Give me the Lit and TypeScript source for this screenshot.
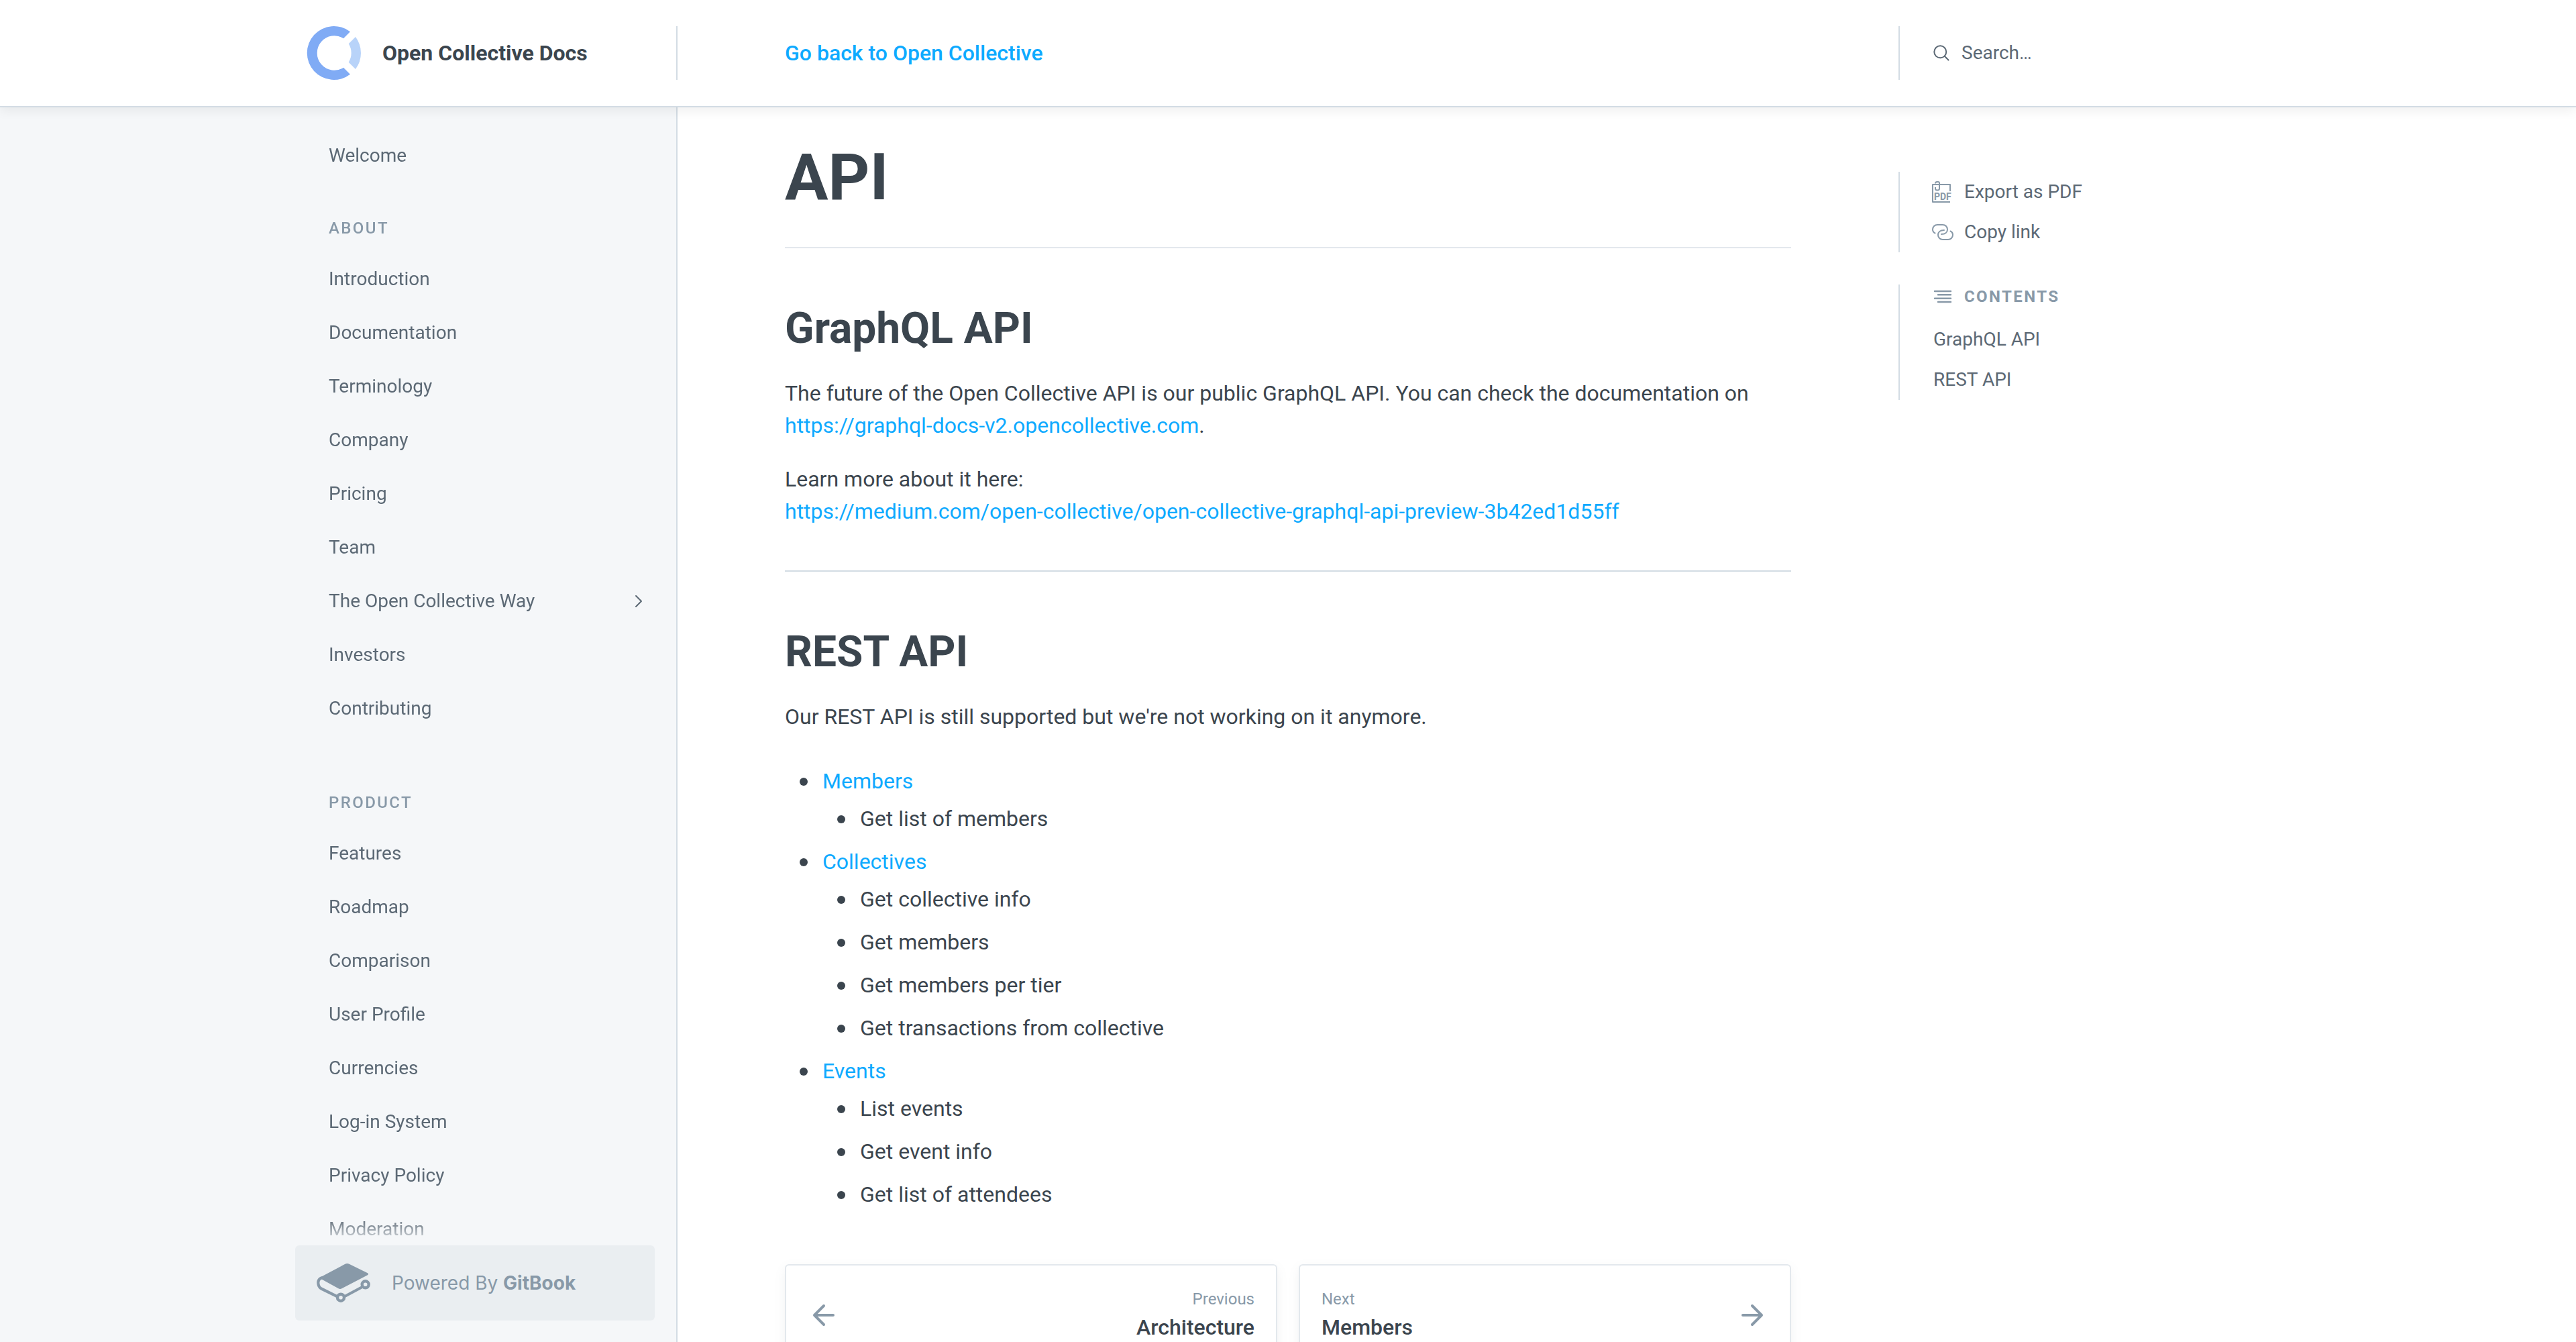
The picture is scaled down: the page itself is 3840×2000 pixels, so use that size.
import { LitElement, html, css, svg } from "lit";
import { customElement } from "lit/decorators.js";

interface Section {
  title?: string;
  pages: { label: string; nested?: boolean }[];
}

const page = (label: string, nested = false) => ({ label, nested });

const SECTIONS: Section[] = [
  { pages: [page("Welcome")] },
  {
    title: "About",
    pages: [
      page("Introduction"),
      page("Documentation"),
      page("Terminology"),
      page("Company"),
      page("Pricing"),
      page("Team"),
      page("The Open Collective Way", true),
      page("Investors"),
      page("Contributing"),
    ],
  },
  {
    title: "Product",
    pages: [
      page("Features"),
      page("Roadmap"),
      page("Comparison"),
      page("User Profile"),
      page("Currencies"),
      page("Log-in System"),
      page("Privacy Policy"),
      page("Moderation"),
    ],
  },
];

const ENDPOINTS = [
  { name: "Members", items: ["Get list of members"] },
  {
    name: "Collectives",
    items: [
      "Get collective info",
      "Get members",
      "Get members per tier",
      "Get transactions from collective",
    ],
  },
  { name: "Events", items: ["List events", "Get event info", "Get list of attendees"] },
];

const arrow = (left: boolean) => html`
  <svg class="arrow" viewBox="0 0 32 32" aria-hidden="true">
    ${left
      ? svg`<path d="M30 16H2M16 2L2 16L16 30" />`
      : svg`<path d="M2 16H30M16 2L30 16L16 30" />`}
  </svg>
`;

@customElement("app-root")
export class AppRoot extends LitElement {
  static styles = css`
    :host {
      display: flex;
      flex-direction: column;
      height: 100vh;
      overflow: hidden;
      background: #fff;
      color: #3b454e;
      font-family: Roboto, "Liberation Sans", sans-serif;
      font-size: 32px;
      line-height: 48px;
    }
    * {
      box-sizing: border-box;
    }
    a {
      color: inherit;
      text-decoration: none;
    }
    svg {
      display: block;
      flex: none;
      overflow: visible;
      fill: none;
      stroke: currentColor;
      stroke-linecap: round;
      stroke-linejoin: round;
    }
    button,
    input {
      font: inherit;
      color: inherit;
      background: none;
      border: 0;
      padding: 0;
      margin: 0;
    }
    h1,
    h2,
    h3,
    p,
    ul {
      margin: 0;
      padding: 0;
    }
    h1,
    h2 {
      font-weight: 700;
    }

    .header {
      position: relative;
      z-index: 1;
      display: flex;
      align-items: center;
      flex: none;
      height: 160px;
      border-bottom: 2px solid #d3dce4;
      box-shadow: 0 6px 16px rgba(0, 0, 0, 0.06);
      background: #fff;
    }
    .brand {
      display: flex;
      align-items: center;
      gap: 32px;
      width: calc(50% - 910px);
      min-width: 600px;
      height: 80px;
      padding-left: calc(50% - 1462px);
      border-right: 2px solid #d3dce4;
      font-weight: 700;
    }
    .logo {
      width: 80px;
      height: 80px;
    }
    .back {
      flex: 1;
      padding-left: 160px;
      color: #0eaaff;
      font-weight: 500;
    }
    .search {
      display: flex;
      align-items: center;
      gap: 16px;
      width: calc(50% - 910px);
      height: 80px;
      padding-left: 48px;
      border-left: 2px solid #d3dce4;
      color: #5c6975;
      font-size: 28px;
    }
    .search svg {
      width: 28px;
      height: 28px;
      stroke-width: 2;
    }
    .search input {
      width: 320px;
      height: 48px;
      outline: none;
    }
    .search input::placeholder {
      color: #5c6975;
      opacity: 1;
    }

    .body {
      display: flex;
      flex: 1;
      min-height: 0;
    }
    .sidebar {
      display: flex;
      flex-direction: column;
      width: calc(50% - 910px);
      min-width: 600px;
      padding-left: calc(50% - 1480px);
      padding-right: 32px;
      border-right: 2px solid #d3dce4;
      background: #f5f7f9;
      color: #5c6975;
      font-size: 28px;
    }
    .nav {
      flex: 1;
      min-height: 0;
      overflow: hidden;
      padding: 32px 14px 0 50px;
      mask-image: linear-gradient(to top, transparent, #000 40px);
    }
    .section + .section {
      padding-top: 32px;
    }
    .section + .section + .section {
      padding-top: 64px;
    }
    .caps {
      color: #8899a8;
      font-size: 24px;
      font-weight: 500;
      line-height: 32px;
      letter-spacing: 0.1em;
      text-transform: uppercase;
    }
    .section .caps {
      padding: 20px 0;
    }
    .link {
      display: flex;
      align-items: center;
      justify-content: space-between;
      height: 80px;
    }
    .link svg {
      width: 20px;
      height: 20px;
      stroke-width: 2;
    }
    .powered {
      display: flex;
      align-items: center;
      gap: 32px;
      flex: none;
      height: 112px;
      margin-bottom: 32px;
      padding-left: 32px;
      border-radius: 6px;
      background: #eaeef1;
      color: #8899a8;
      font-family: Inter, Roboto, sans-serif;
    }
    .powered svg {
      width: 80px;
      height: 60px;
    }
    .powered b {
      font-weight: 700;
    }

    .main {
      flex: 1;
      min-width: 0;
      padding: 48px 160px 0;
      overflow: hidden;
    }
    h1 {
      padding-bottom: 48px;
      border-bottom: 2px solid #e3e8ed;
      font-size: 96px;
      line-height: 112px;
    }
    h2 {
      margin: 80px 0 32px;
      font-size: 64px;
      line-height: 80px;
    }
    p + p {
      margin-top: 32px;
    }
    .text a {
      color: #0eaaff;
    }
    hr {
      height: 2px;
      margin: 64px 0 0;
      border: 0;
      background: #d3dce4;
    }
    .list {
      margin-top: 48px;
    }
    ul {
      list-style: none;
    }
    .list li {
      position: relative;
      padding-left: 56px;
    }
    .list li + li {
      margin-top: 16px;
    }
    .list li ul {
      margin-top: 8px;
    }
    .list li::before {
      content: "";
      position: absolute;
      left: 22px;
      top: 19px;
      width: 12px;
      height: 12px;
      border-radius: 50%;
      background: #3b454e;
    }
    .pager {
      display: grid;
      grid-template-columns: 1fr 1fr;
      gap: 32px;
      margin-top: 80px;
    }
    .card {
      display: flex;
      align-items: center;
      justify-content: space-between;
      height: 152px;
      padding: 0 32px 0 40px;
      border: 2px solid #e3e8ed;
      border-radius: 6px;
      box-shadow: 0 6px 16px rgba(116, 129, 141, 0.1);
      font-weight: 500;
      line-height: 44px;
    }
    .card.next {
      padding: 0 40px 0 32px;
    }
    .card span {
      padding-bottom: 4px;
    }
    .card small {
      display: block;
      color: #8899a8;
      font-size: 24px;
      font-weight: 400;
      line-height: 40px;
    }
    .prev {
      text-align: right;
    }
    .arrow {
      width: 32px;
      height: 32px;
      color: #8899a8;
      stroke-width: 4;
    }

    .aside {
      display: flex;
      flex-direction: column;
      gap: 48px;
      width: calc(50% - 910px);
      padding-top: 96px;
      color: #5c6975;
      font-size: 28px;
      line-height: 60px;
    }
    .group {
      display: flex;
      flex-direction: column;
      border-left: 2px solid #d3dce4;
      padding-left: 50px;
    }
    .tools {
      padding-left: 48px;
    }
    .tool {
      display: flex;
      align-items: center;
      gap: 16px;
      height: 60px;
      cursor: pointer;
    }
    .tool svg {
      width: 32px;
      height: 32px;
      color: #8899a8;
      stroke-width: 2;
    }
    .contents {
      display: flex;
      align-items: center;
      gap: 18px;
      padding: 2px 0 18px;
    }
    .contents svg {
      width: 28px;
      height: 20px;
      stroke-width: 2.4;
    }
    .group .caps {
      font-weight: 700;
    }
    .pdf {
      font: 700 14px Roboto, sans-serif;
      fill: currentColor;
      stroke: none;
    }
  `;

  render() {
    return html`
      <header class="header">
        <a class="brand" href="#">
          <svg class="logo" viewBox="0 0 80 80" aria-hidden="true">
            <path
              d="M64 8.200A40 40 0 1 0 64 71.800L54 61.800A25.700 25.700 0 1 1 54 18.200Z"
              fill="#80abf5" stroke="none"
            />
            <path
              d="M72 16A40 40 0 0 1 72 64L61.700 53.700A25.700 25.700 0 0 0 61.700 26.300Z"
              fill="#b8d3f9" stroke="none"
            />
          </svg>
          Open Collective Docs
        </a>
        <a class="back" href="#">Go back to Open Collective</a>
        <label class="search">
          <svg viewBox="0 0 28 28" aria-hidden="true">
            <circle cx="12.300" cy="12.300" r="9" />
            <path d="M18.800 18.800L24.500 24.500" />
          </svg>
          <input type="search" placeholder="Search…" aria-label="Search" />
        </label>
      </header>
      <div class="body">
        <aside class="sidebar">
          <nav class="nav">
            ${SECTIONS.map(
              (s) => html`<div class="section">
                ${s.title ? html`<h3 class="caps">${s.title}</h3>` : ""}
                ${s.pages.map(
                  (p) => html`<a class="link" href="#"
                    >${p.label}${p.nested
                      ? html`<svg viewBox="0 0 20 20" aria-hidden="true"><path d="M6 2L14 10L6 18" /></svg>`
                      : ""}</a
                  >`
                )}
              </div>`
            )}
          </nav>
          <a class="powered" href="#">
            <svg viewBox="0 0 80 60" aria-hidden="true">
              <path
                d="M4.500 22L42.500 1.800Q45.500 .3 48.500 1.800L76 15.300Q78.200 16.800 76 18.200L37.500 38.300Q35 39.700 32.500 38.300L7.500 24.500Q5.500 24.500 3 27Z"
                fill="currentColor" stroke="none"
              />
              <path d="M7 22.500Q2.200 24.500 2.300 30Q2.500 36 7 38.500L31 50.300M41 50.500L68 36" stroke-width="4.200" />
              <circle cx="36" cy="51.700" r="5" stroke-width="4.400" fill="#eaeef1" />
              <circle cx="72.700" cy="32.300" r="5" stroke-width="4.400" fill="#eaeef1" />
            </svg>
            <span>Powered By <b>GitBook</b></span>
          </a>
        </aside>
        <main class="main">
          <h1>API</h1>
          <section class="text">
            <h2>GraphQL API</h2>
            <p>
              The future of the Open Collective API is our public GraphQL API. You can check the documentation on
              <a href="#">https://graphql-docs-v2.opencollective.com</a>.
            </p>
            <p>
              Learn more about it here:<br />
              <a href="#">https://medium.com/open-collective/open-collective-graphql-api-preview-3b42ed1d55ff</a>
            </p>
          </section>
          <hr />
          <section class="text">
            <h2>REST API</h2>
            <p>Our REST API is still supported but we're not working on it anymore.</p>
            <ul class="list">
              ${ENDPOINTS.map(
                (e) => html`<li>
                  <a href="#">${e.name}</a>
                  <ul>
                    ${e.items.map((i) => html`<li>${i}</li>`)}
                  </ul>
                </li>`
              )}
            </ul>
          </section>
          <nav class="pager">
            <a class="card prev" href="#">${arrow(true)}<span><small>Previous</small>Architecture</span></a>
            <a class="card next" href="#"><span><small>Next</small>Members</span>${arrow(false)}</a>
          </nav>
        </main>
        <aside class="aside">
          <div class="group tools">
            <button class="tool">
              <svg viewBox="0 0 32 32" aria-hidden="true">
                <path
                  d="M27 15V5H1V31H27M5 3.500Q5 1 7.500 1H9Q11 1 11 3V11Q11 13.500 8 13.500Q5 13.500 5 11V9"
                  stroke-linecap="butt"
                />
                <text class="pdf" x="3" y="28">PDF</text>
              </svg>
              Export as PDF
            </button>
            <button class="tool">
              <svg viewBox="0 0 32 32" aria-hidden="true">
                <path
                  d="M4.500 17.500C2.500 16.500 1 14.500 1 12C1 8 4 5 8 5H16C20 5 23 8 23 12C23 16 20 19 14 19M27.500 14.500C29.500 15.500 31 17.500 31 20C31 24 28 27 24 27H16C12 27 9 24 9 20C9 16 12 13 18 13"
                />
              </svg>
              Copy link
            </button>
          </div>
          <nav class="group">
            <h3 class="caps contents">
              <svg viewBox="0 0 28 20" aria-hidden="true">
                <path d="M2 2H26M7 7.300H26M2 12.700H26M7 18H26" />
              </svg>
              Contents
            </h3>
            <a href="#">GraphQL API</a>
            <a href="#">REST API</a>
          </nav>
        </aside>
      </div>
    `;
  }
}
